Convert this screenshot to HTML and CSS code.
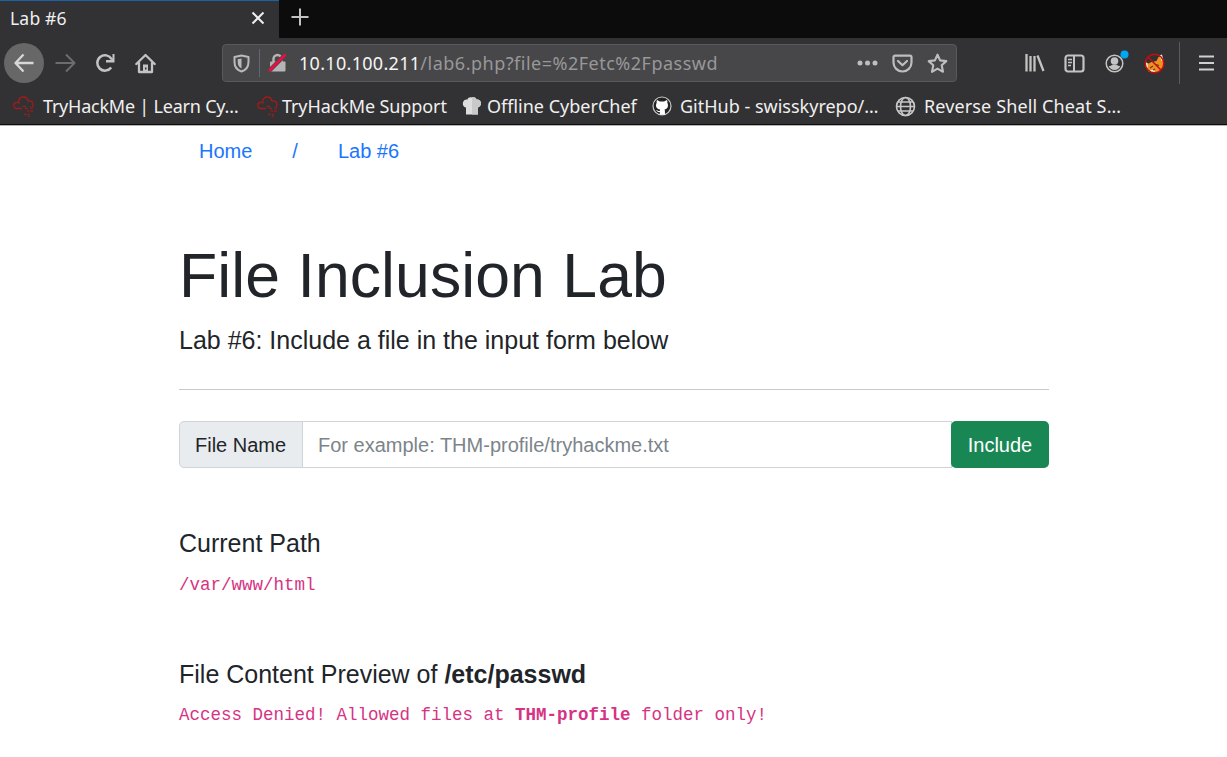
FILE: index.html
```html
<!DOCTYPE html>
<html lang="en">
<head>
<meta charset="utf-8">
<title>Lab #6</title>
<link rel="stylesheet" href="styles.css">
</head>
<body>
<header class="browser">
  <div class="tabs">
    <div class="tab"><span class="tab-title">Lab #6</span>
      <svg class="tab-close" width="14" height="14" viewBox="0 0 14 14"><path d="M1.500 1.500l11 11M12.500 1.500l-11 11" stroke="#eee" stroke-width="2"/></svg>
    </div>
    <svg class="new-tab" width="18" height="18" viewBox="0 0 18 18"><path d="M9 .5v17M.5 9h17" stroke="#c3c3c3" stroke-width="2"/></svg>
  </div>
  <nav class="toolbar">
    <span class="back"><svg width="20" height="20" viewBox="0 0 20 20"><path d="M19.500 10H2M9.500 1.500L1.500 10l8 8.500" fill="none" stroke="#d8d8d8" stroke-width="2.300" stroke-linejoin="round"/></svg></span>
    <svg class="forward" width="21" height="20" viewBox="0 0 21 20"><path d="M.5 10H19M11 1.500L19.500 10 11 18.500" fill="none" stroke="#6d6d6e" stroke-width="2" stroke-linejoin="round"/></svg>
    <svg class="reload" width="21" height="20" viewBox="0 0 21 20"><path d="M16.200 14.500A7.700 7.700 0 1 1 16.600 6" fill="none" stroke="#c3c3c3" stroke-width="2.500"/><path d="M19.500 1v8.500H11V7h4.500L17.500 5V1z" fill="#c3c3c3"/></svg>
    <svg class="home" width="21" height="21" viewBox="0 0 21 21"><path d="M1.300 11L10.500 2l9.200 9M4 10v9h13v-9" fill="none" stroke="#c3c3c3" stroke-width="2.300" stroke-linejoin="round" stroke-linecap="round"/><path d="M8 19v-7.500h5V19zM10 14.500v2h1.500v-2z" fill="#c3c3c3" fill-rule="evenodd"/></svg>
    <div class="urlbar">
      <svg class="shield" width="17" height="19" viewBox="0 0 17 19"><path d="M8.500 1.500L15.500 3v5c0 5-2.500 8-7 9.500C4 16 1.500 13 1.500 8V3z" fill="none" stroke="#bababb" stroke-width="2" stroke-linejoin="round"/><path d="M8.500 4.500v10C5.700 13 4.700 11 4.700 8V5.300z" fill="#bababb"/></svg>
      <span class="divider"></span>
      <svg class="lock" width="19" height="20" viewBox="0 0 19 20"><path d="M5.500 9V6a4 4 0 0 1 8 0v3" fill="none" stroke="#b5b5b6" stroke-width="2.400"/><rect x="2" y="8.500" width="15.500" height="10" rx="1" fill="#b5b5b6"/><path d="M1 18L17.500 1.500" stroke="#48484a" stroke-width="4.200"/><path d="M1 18L17.500 1.500" stroke="#f20d43" stroke-width="2.500"/></svg>
      <span class="url"><span class="host">10.10.100.211</span><span class="path">/lab6.php?file=%2Fetc%2Fpasswd</span></span>
      <svg class="dots" width="21" height="6" viewBox="0 0 21 6" fill="#bebebe"><circle cx="3" cy="3" r="2.500"/><circle cx="10.500" cy="3" r="2.500"/><circle cx="18" cy="3" r="2.500"/></svg>
      <svg class="pocket" width="21" height="19" viewBox="0 0 21 19"><path d="M3 1.700h15a1.500 1.500 0 0 1 1.500 1.500V8.500a9 9 0 0 1-18 0V3.200A1.500 1.500 0 0 1 3 1.700zM6 7l4.500 4.200L15 7" fill="none" stroke="#bebebe" stroke-width="2.200" stroke-linecap="round" stroke-linejoin="round"/></svg>
      <svg class="star" width="21" height="21" viewBox="0 0 21 21"><path d="M10.500 1.700l2.600 5.700 6.200.7-4.600 4.200 1.300 6.500-5.500-3.200-5.500 3.200 1.300-6.500L1.700 8.100l6.200-.7z" fill="none" stroke="#bebebe" stroke-width="2.100" stroke-linejoin="round"/></svg>
    </div>
    <svg class="library" width="20" height="18" viewBox="0 0 20 18"><path d="M1.500 0v17.500M5.500 2v15.500M9.500 2v15.500M12.500 1.500l6 15.500" stroke="#c3c3c3" stroke-width="2.300" fill="none"/></svg>
    <svg class="sidebar" width="21" height="19" viewBox="0 0 21 19"><rect x="1.500" y="1.500" width="18" height="16" rx="2.500" fill="none" stroke="#c3c3c3" stroke-width="2.200"/><path d="M10 1v17" stroke="#c3c3c3" stroke-width="2"/><path d="M4 5.500h4M4 8.500h4M4 11.500h3" stroke="#c3c3c3" stroke-width="1.300"/></svg>
    <svg class="account" width="25" height="24" viewBox="0 0 25 24"><circle cx="9.500" cy="13.500" r="8.300" fill="none" stroke="#c3c3c3" stroke-width="1.500"/><circle cx="9.500" cy="11" r="3.800" fill="#c3c3c3"/><path d="M3.700 16c1.800.2 2.700-.5 3.600-1.200h4.400c.9.700 1.800 1.400 3.600 1.200-1 2.700-3.300 4-5.800 4s-4.800-1.300-5.800-4z" fill="#c3c3c3"/><circle cx="19.500" cy="4.500" r="4" fill="#00a8f3"/></svg>
    <svg class="fox" width="21" height="21" viewBox="0 0 21 21"><path d="M1.500 9l3 1.500 3-1.500 5-1 2-4 3-1.500 1.500 5 .5 6-4 5-6 1.500-5-1.500-3-5z" fill="#ee9022"/><path d="M1 8.500l2.500 2 .5 4-2-1zM15.500 2.500l2.500-1 1.500 6-2 .5zM5.500 17.500l4-1 2 3-3 .5z" fill="#efe9e2"/><path d="M6 15l3-2M12 11.500l3 1M9 17l2-1" stroke="#6a3a10" stroke-width="1.300"/><circle cx="10.500" cy="10.500" r="9.300" fill="none" stroke="#c40d0d" stroke-width="1.500"/><path d="M4 4l13 13" stroke="#c40d0d" stroke-width="1.500"/></svg>
    <span class="rule"></span>
    <svg class="menu" width="15" height="16" viewBox="0 0 15 16"><path d="M0 1.500h15M0 8h15M0 14.500h15" stroke="#d0d0d0" stroke-width="2"/></svg>
  </nav>
  <svg class="defs" width="0" height="0"><symbol id="cloud" viewBox="0 0 21 21"><path d="M9 12.500H4a3 3 0 0 1-.3-6.200c1-.2 1.500 0 2.200.5C5 2.500 8 1 10.500 1s4 1.500 4.500 4c3-.5 5 1 5 3.500 0 1-.3 1.800-1 2.500M10 10.500h3" fill="none" stroke="#a51a1b" stroke-width="1.300"/><path d="M12 12.500h3M17 12h3M14 15h2M17 15h3M11 18.500h3M15 18.500h2M15 20.500h2" stroke="#8c2022" stroke-width="1.300"/></symbol></svg>
  <div class="bookmarks">
    <a class="bookmark b1"><svg width="21" height="21"><use href="#cloud"/></svg><span>TryHackMe | Learn Cy…</span></a>
    <a class="bookmark b2"><svg width="21" height="21"><use href="#cloud"/></svg><span>TryHackMe Support</span></a>
    <a class="bookmark b3"><svg width="20" height="20" viewBox="0 0 20 20"><path d="M4 18.500v-7C1 11 .5 8 1 6.500 1.500 4 3.500 3 5.500 3.500 6 1.500 8 1 10 1.500c2-.7 4 0 4.500 2 2.500-.5 4.200 1 4.500 3.500.2 2-1 4-3 4.500v7z" fill="#dedede"/><path d="M10 1.500c2-.7 4 0 4.500 2 2.500-.5 4.200 1 4.500 3.500.2 2-1 4-3 4.500v7h-6z" fill="#c9c9c9"/></svg><span>Offline CyberChef</span></a>
    <a class="bookmark b4"><svg width="20" height="20" viewBox="0 0 20 20"><circle cx="10" cy="10" r="9" fill="#232324" stroke="#c9c9c9" stroke-width="1.200"/><path d="M5 4l3 1.500h4L15 4c.5 1 .5 2 .3 2.700C17 10 15.500 13 12.500 13.500c.5.800.5 1.500.5 5.200H7.800V16C5.500 16.500 5 15 4 14c1.500 0 2 1.500 3.800 1 0-.7.100-1.100.4-1.500C4.500 13 3 10 4.700 6.700 4.500 6 4.500 5 5 4z" fill="#fff"/></svg><span>GitHub - swisskyrepo/…</span></a>
    <a class="bookmark b5"><svg width="21" height="21" viewBox="0 0 21 21"><g fill="none" stroke="#c8c8c8" stroke-width="1.600"><circle cx="10.500" cy="10.500" r="9"/><ellipse cx="10.500" cy="10.500" rx="5" ry="9"/><path d="M1.500 10.500h18M3 6h15M3 15h15"/></g></svg><span>Reverse Shell Cheat S…</span></a>
  </div>
</header>
<main class="page">
  <nav class="crumbs"><a>Home</a><span>/</span><a>Lab #6</a></nav>
  <h1>File Inclusion Lab</h1>
  <p class="lead">Lab #6: Include a file in the input form below</p>
  <hr>
  <form class="form">
    <label for="file">File Name</label>
    <input id="file" type="text" placeholder="For example: THM-profile/tryhackme.txt">
    <button type="button">Include</button>
  </form>
  <section class="current">
    <h5>Current Path</h5>
    <code>/var/www/html</code>
  </section>
  <section class="preview">
    <h5>File Content Preview of <b>/etc/passwd</b></h5>
    <code>Access Denied! Allowed files at <b>THM-profile</b> folder only!</code>
  </section>
</main>
</body>
</html>
```
FILE: styles.css
```css
* { box-sizing: border-box; }
body { margin: 0; background: #fff; color: #212529; font: 20px/30px "Liberation Sans", Arial, sans-serif; overflow: hidden; }
svg { flex: none; display: block; }
.browser { height: 126px; background: #323234; border-bottom: 1px solid #b5b5b5; box-shadow: inset 0 -1px #0c0c0d; color: #f0f0f0; font: 18px/24px "Noto Sans", sans-serif; }
.defs { position: absolute; }
.tabs { display: flex; height: 38px; background: #0c0c0d; }
.tab { display: flex; align-items: center; justify-content: space-between; width: 279px; padding: 0 14px 4px 10px; background: #323234; border-top: 1px solid #1c62a8; }
.tab-title { font-size: 17.500px; letter-spacing: .2px; }
.new-tab { margin: 8px 0 0 12px; }
.toolbar { display: flex; align-items: center; height: 50px; padding-left: 4px; }
.back { display: flex; align-items: center; justify-content: center; width: 40px; height: 40px; border-radius: 50%; background: #676767; }
.forward { margin-left: 11px; }
.reload { margin-left: 19px; }
.home { margin-left: 19px; }
.urlbar { display: flex; align-items: center; width: 735px; height: 38px; margin-left: 66px; padding-left: 10px; background: #474749; border: 1px solid #59595b; border-radius: 4px; }
.divider { width: 1px; height: 28px; margin-left: 9px; background: #606774; }
.lock { margin-left: 8px; }
.url { width: 548px; margin-left: 12px; white-space: nowrap; }
.host { color: #f5f5f5; letter-spacing: .3px; }
.path { color: #98989a; letter-spacing: .5px; }
.dots { margin-left: 10px; }
.pocket { margin-left: 14px; }
.star { margin-left: 14px; }
.library { margin-left: 68px; }
.sidebar { margin-left: 19px; }
.account { margin: -2px 0 0 20px; }
.fox { margin-left: 14px; }
.rule { width: 1px; height: 42px; margin-left: 14px; background: #5b5b5d; }
.menu { margin-left: 19px; }
.bookmarks { display: grid; grid-template-columns: 244px 205px 190px 243px auto; height: 36px; padding-left: 13px; align-items: center; }
.bookmark { display: flex; align-items: center; gap: 9px; white-space: nowrap; }
.b1 { letter-spacing: -.22px; }
.b2 { gap: 4px; letter-spacing: -.1px; }
.b3 { gap: 5px; }
.b4, .b5 { gap: 8px; }
.b5 { letter-spacing: .12px; }
.page { width: 870px; margin-left: 179px; }
.crumbs { display: flex; gap: 40px; padding: 10px 0 0 20px; color: #1a75ff; }
h1 { margin: 72px 0 0; font-size: 62.500px; letter-spacing: .08px; line-height: 75px; font-weight: 400; }
.lead { margin: 9px 0 0; font-size: 25px; line-height: 37px; }
hr { height: 1px; margin: 30px 0 31px; border: 0; background: #c8c9ca; }
.form { display: flex; height: 47px; }
label { width: 124px; padding: 8px 15px; background: #e9ecef; border: 1px solid #ced4da; border-radius: 5px 0 0 5px; white-space: nowrap; }
input { flex: 1; min-width: 0; margin-left: -1px; padding: 1px 15px 0; border: 1px solid #ced4da; font: inherit; background: #fff; }
input::placeholder { color: #7c848b; opacity: 1; }
button { width: 98px; padding: 1px 0 0; border: 0; border-radius: 5px; background: #198754; color: #fff; font: inherit; margin-left: -1px; }
h5 { margin: 0 0 12px; font-size: 25px; line-height: 30px; font-weight: 400; }
code { display: block; color: #d63384; font: 17.500px/30px "Liberation Mono", monospace; white-space: nowrap; }
.current { margin-top: 60px; }
.preview { margin-top: 59px; }
.preview h5 { margin-bottom: 11px; }
```
